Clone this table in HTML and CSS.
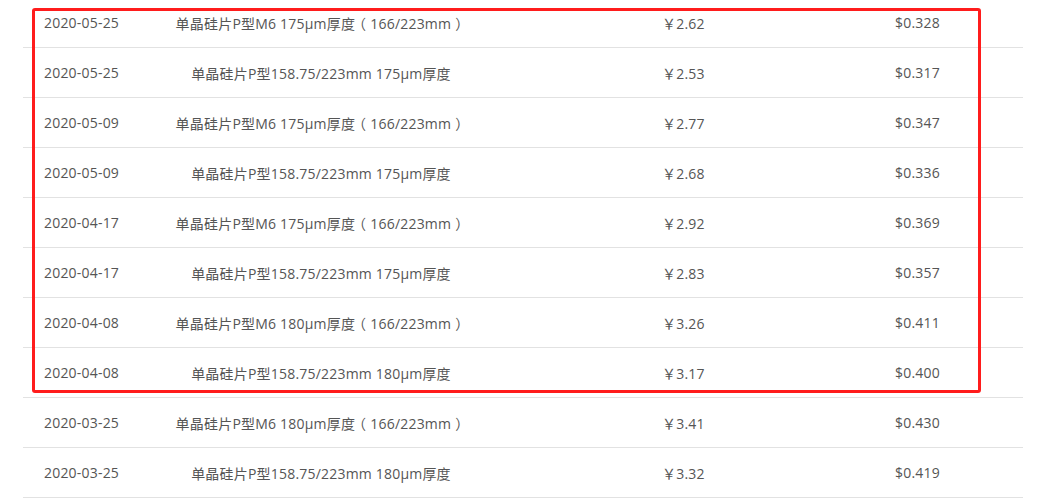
FILE: index.html
```html
<!DOCTYPE html>
<html lang="zh-CN">
<head>
  <meta charset="UTF-8" />
  <title>单晶硅片价格</title>
  <link rel="stylesheet" href="styles.css">
</head>
<body>
  <div class="price-table">
    <div class="row"><span class="date">2020-05-25</span><span class="name">单晶硅片P型M6 175μm厚度<i>（</i>166/223mm<i>）</i></span><span class="rmb">￥2.62</span><span class="usd">$0.328</span></div>
    <div class="row"><span class="date">2020-05-25</span><span class="name">单晶硅片P型158.75/223mm 175μm厚度</span><span class="rmb">￥2.53</span><span class="usd">$0.317</span></div>
    <div class="row"><span class="date">2020-05-09</span><span class="name">单晶硅片P型M6 175μm厚度<i>（</i>166/223mm<i>）</i></span><span class="rmb">￥2.77</span><span class="usd">$0.347</span></div>
    <div class="row"><span class="date">2020-05-09</span><span class="name">单晶硅片P型158.75/223mm 175μm厚度</span><span class="rmb">￥2.68</span><span class="usd">$0.336</span></div>
    <div class="row"><span class="date">2020-04-17</span><span class="name">单晶硅片P型M6 175μm厚度<i>（</i>166/223mm<i>）</i></span><span class="rmb">￥2.92</span><span class="usd">$0.369</span></div>
    <div class="row"><span class="date">2020-04-17</span><span class="name">单晶硅片P型158.75/223mm 175μm厚度</span><span class="rmb">￥2.83</span><span class="usd">$0.357</span></div>
    <div class="row"><span class="date">2020-04-08</span><span class="name">单晶硅片P型M6 180μm厚度<i>（</i>166/223mm<i>）</i></span><span class="rmb">￥3.26</span><span class="usd">$0.411</span></div>
    <div class="row"><span class="date">2020-04-08</span><span class="name">单晶硅片P型158.75/223mm 180μm厚度</span><span class="rmb">￥3.17</span><span class="usd">$0.400</span></div>
    <div class="row"><span class="date">2020-03-25</span><span class="name">单晶硅片P型M6 180μm厚度<i>（</i>166/223mm<i>）</i></span><span class="rmb">￥3.41</span><span class="usd">$0.430</span></div>
    <div class="row"><span class="date">2020-03-25</span><span class="name">单晶硅片P型158.75/223mm 180μm厚度</span><span class="rmb">￥3.32</span><span class="usd">$0.419</span></div>

    <div class="mark"></div>
  </div>
</body>
</html>
```

FILE: styles.css
```css
body {
  margin: 0;
  background: #fff;
  color: #555;
  font-family: "Open Sans", "Noto Sans CJK SC", sans-serif;
  font-size: 14px;
  letter-spacing: 0.2px;
  overflow: hidden;
}
.price-table {
  position: relative;
  width: 1000px;
  margin: -2px 0 0 23px;
}
.row {
  display: grid;
  grid-template-columns: 140px 316px 416px 128px;
  align-items: center;
  height: 49px;
  border-bottom: 1px solid #e2e2e2;
  white-space: nowrap;
}
.date {
  padding-left: 21px;
}
.name {
  text-align: center;
}
/* full-width brackets: half-width glyph, centred in a full box */
.name i {
  display: inline-block;
  font-style: normal;
  font-feature-settings: "halt";
  padding: 0 4px;
}
.rmb {
  padding-left: 183px;
}
.mark {
  position: absolute;
  left: 9px;
  top: 10px;
  width: 943px;
  height: 379px;
  border: 3px solid #ff1c1c;
  border-radius: 3px;
}
```
